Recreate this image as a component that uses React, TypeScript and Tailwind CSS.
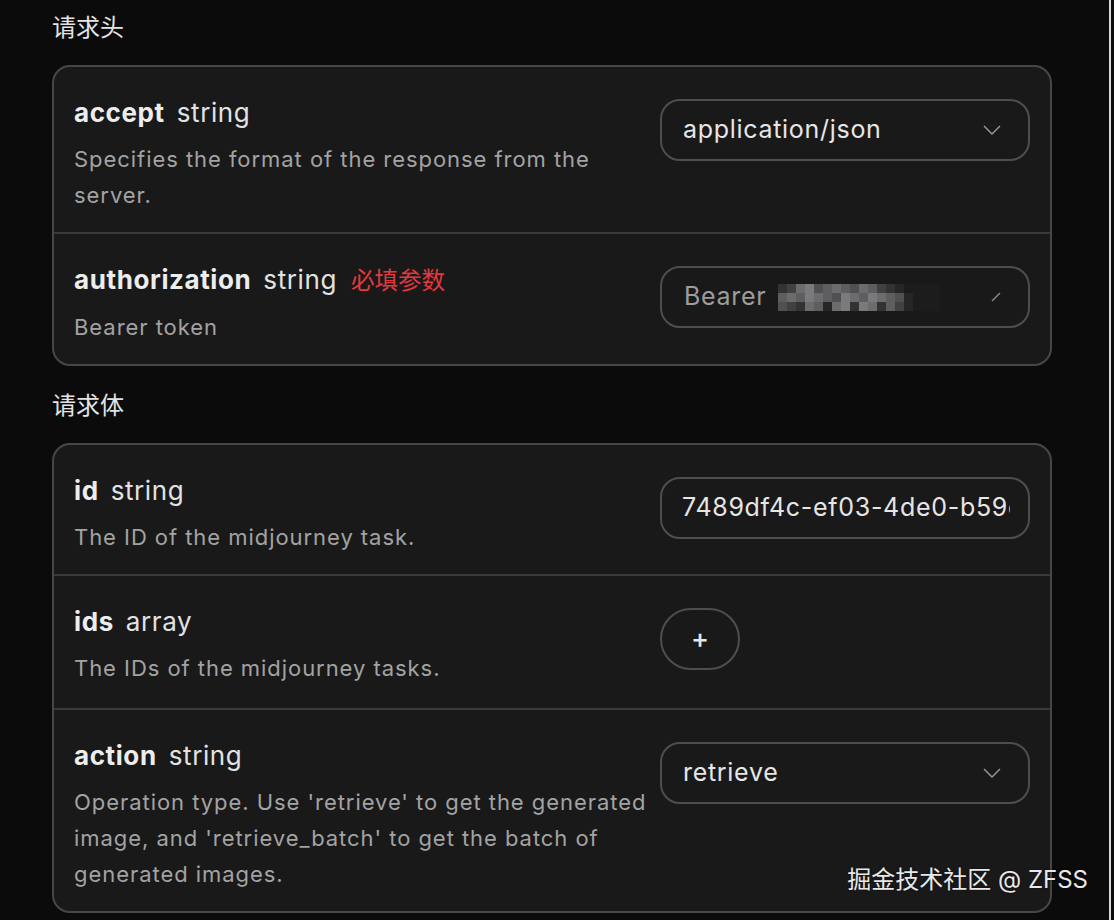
import React from "react";

const font = { fontFamily: '"Inter", "Noto Sans CJK SC", sans-serif' };

// pseudo-random mosaic for the blurred token
const mosaic = [
  [2, 3, 6, 7, 4, 5, 6, 5, 4, 6, 5, 3, 2, 1, 0, 0, 0, 0],
  [5, 6, 5, 7, 6, 5, 4, 7, 6, 5, 7, 6, 5, 4, 1, 0, 0, 0],
  [4, 3, 2, 6, 5, 1, 6, 7, 2, 7, 6, 2, 5, 3, 1, 0, 0, 0],
];
const greys = ["#1c1c1d", "#262627", "#333334", "#414142", "#505051", "#5e5e60", "#6c6c6e", "#7a7a7c"];

function Chevron() {
  return (
    <svg width="20" height="12" viewBox="0 0 20 12" fill="none">
      <path d="M2 2 L10 10 L18 2" stroke="#9b9b9b" strokeWidth="1.4" />
    </svg>
  );
}

const box =
  "mt-[4px] flex h-[62px] w-[370px] shrink-0 items-center rounded-[20px] border-2 border-[#4e4e4e]";

function Select({ value }: { value: string }) {
  return (
    <div className={`${box} justify-between pl-[21px] pr-[26px]`}>
      <span className="text-[25px] tracking-[0.7px] text-[#e6e6e6]">{value}</span>
      <Chevron />
    </div>
  );
}

function TokenInput() {
  return (
    <div className={`${box} justify-between pl-[22px] pr-[26px]`}>
      <div className="flex items-center gap-[12px]">
        <span className="text-[25px] tracking-[0.7px] text-[#9d9d9d]">Bearer</span>
        <div className="flex flex-col">
          {mosaic.map((row, i) => (
            <div key={i} className="flex">
              {row.map((g, j) => (
                <div key={j} className="h-[9px] w-[9px]" style={{ background: greys[g] }} />
              ))}
            </div>
          ))}
        </div>
      </div>
      <svg width="12" height="12" viewBox="0 0 12 12">
        <path d="M2 10 L10 2" stroke="#8a8a8a" strokeWidth="1.4" />
      </svg>
    </div>
  );
}

function TextInput({ value }: { value: string }) {
  return (
    <div className={`${box} overflow-hidden pl-[20px] pr-[18px]`}>
      <span className="block overflow-hidden whitespace-nowrap text-[25px] tracking-[0.7px] text-[#e6e6e6]">
        {value}
      </span>
    </div>
  );
}

function AddButton() {
  return (
    <div className="w-[370px] shrink-0">
      <div className="mt-[4px] flex h-[62px] w-[80px] items-center justify-center rounded-full border-2 border-[#4e4e4e] text-[27px] font-medium text-[#e6e6e6]">
        +
      </div>
    </div>
  );
}

function Param({
  name,
  type,
  required,
  desc,
  control,
  last,
  tall,
}: {
  name: string;
  type: string;
  required?: boolean;
  desc: React.ReactNode;
  control: React.ReactNode;
  last?: boolean;
  tall?: boolean;
}) {
  return (
    <div
      className={`flex items-start gap-[8px] px-[20px] pt-[28px] ${tall ? "pb-[22px]" : "pb-[19px]"} ${
        last ? "" : "border-b-2 border-[#3a3a3a]"
      }`}
    >
      <div className="flex-1">
        <div className="flex items-baseline gap-[12px] leading-[36px]">
          <span className="text-[26px] font-bold tracking-[0.6px] text-[#ededed]">{name}</span>
          <span className="text-[26px] tracking-[0.6px] text-[#e2e2e2]">{type}</span>
          {required && <span className="ml-[2px] text-[23.5px] text-[#e5393f]">必填参数</span>}
        </div>
        <p className="mt-[10px] text-[22px] leading-[36px] tracking-[0.95px] text-[#a3a3a3]">{desc}</p>
      </div>
      {control}
    </div>
  );
}

function Section({ title, children }: { title: string; children: React.ReactNode }) {
  return (
    <section>
      <h2 className="h-[36px] text-[24px] leading-[36px] text-[#e4e4e4]">{title}</h2>
      <div className="mt-[19px] overflow-hidden rounded-[18px] border-2 border-[#474747] bg-[#19191a]">
        {children}
      </div>
    </section>
  );
}

export default function App() {
  return (
    <div className="relative flex h-[920px] w-[1114px] overflow-hidden bg-[#0b0b0b]" style={font}>
      <main className="flex-1 pl-[52px] pt-[10px]">
        <div className="flex w-[1000px] flex-col gap-[22px]">
          <Section title="请求头">
            <Param
              name="accept"
              type="string"
              desc="Specifies the format of the response from the server."
              control={<Select value="application/json" />}
            />
            <Param
              name="authorization"
              type="string"
              required
              desc="Bearer token"
              control={<TokenInput />}
              last
            />
          </Section>
          <Section title="请求体">
            <Param
              name="id"
              type="string"
              desc="The ID of the midjourney task."
              control={<TextInput value="7489df4c-ef03-4de0-b59e-2a1c" />}
            />
            <Param
              name="ids"
              type="array"
              desc="The IDs of the midjourney tasks."
              control={<AddButton />}
              tall
            />
            <Param
              name="action"
              type="string"
              desc="Operation type. Use 'retrieve' to get the generated image, and 'retrieve_batch' to get the batch of generated images."
              control={<Select value="retrieve" />}
              last
            />
          </Section>
        </div>
      </main>
      <div className="w-[2px] bg-[#d8d8d8]" />
      <div className="w-[3px] bg-[#0b0b0b]" />
      {/* watermark */}
      <div className="absolute right-[26px] top-[862px] text-[24px] leading-[36px] text-[#e8e8e8] [text-shadow:0_0_2px_rgba(0,0,0,0.6)]">
        掘金技术社区 @ ZFSS
      </div>
    </div>
  );
}
